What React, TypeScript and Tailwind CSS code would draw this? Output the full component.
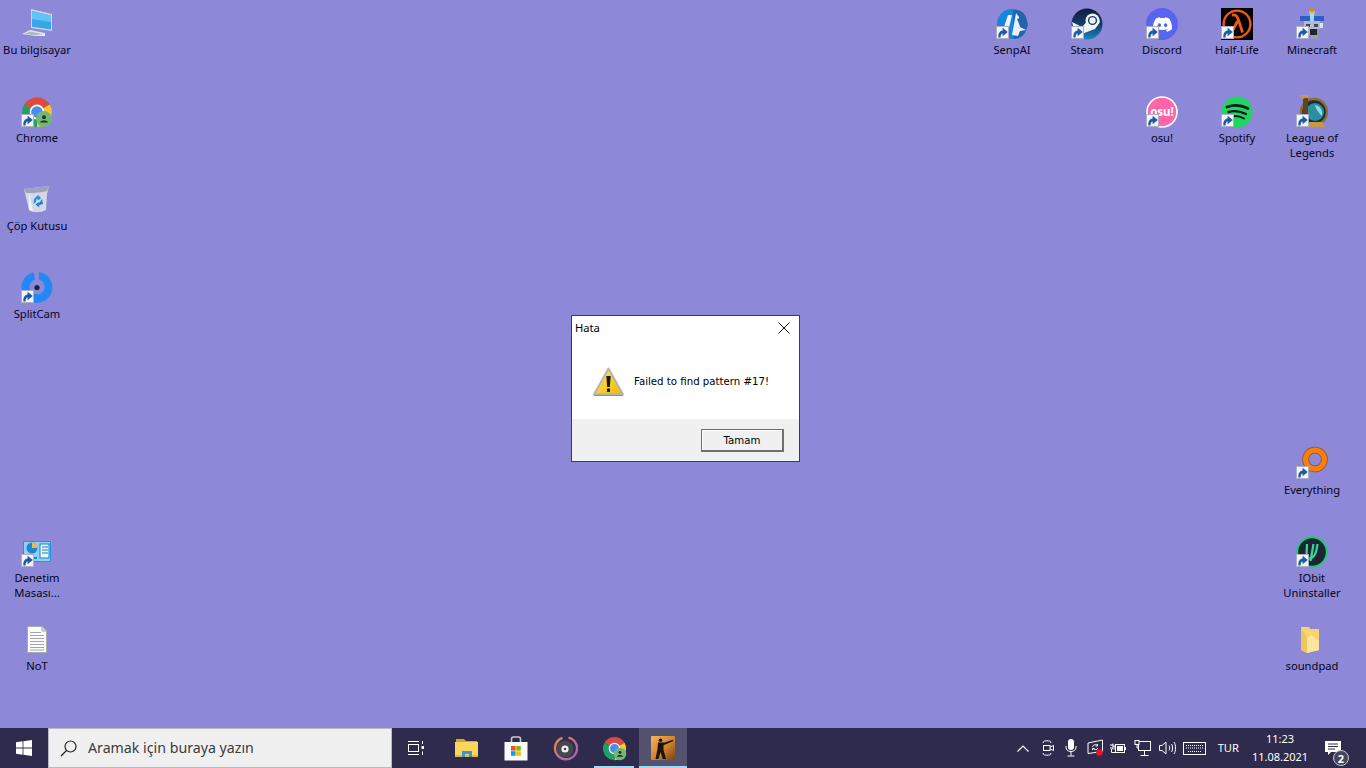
import React from "react";
import { SiDiscord } from "react-icons/si";

const font = { fontFamily: '"Noto Sans", "Liberation Sans", sans-serif' };

function Shortcut() {
  return (
    <svg width="13" height="13" viewBox="0 0 13 13" className="absolute left-0 top-[18px]">
      <rect x="0.5" y="0.5" width="12" height="12" fill="#f2f4fa" stroke="#aeaec4" />
      <path d="M2.4 11.4 C2 7 4 4.6 6.6 4.4 L6.6 1.8 L11.8 6 L6.6 10.2 L6.6 7.6 C5.2 7.8 4.6 9.2 4.6 11.4 Z" fill="#1f5ba3" />
    </svg>
  );
}

function ChromeGlyph({ size = 32 }: { size?: number }) {
  return (
    <svg width={size} height={size} viewBox="0 0 32 32">
      <path d="M16 16 L3.2 8.5 A15 15 0 0 1 28.8 8.5 Z" fill="#dd4b3e" />
      <path d="M16 16 L28.8 8.5 A15 15 0 0 1 16 31 Z" fill="#fbc72c" />
      <path d="M16 16 L16 31 A15 15 0 0 1 3.2 8.5 Z" fill="#1da261" />
      <circle cx="16" cy="16" r="7.4" fill="#fff" />
      <circle cx="16" cy="16" r="5.8" fill="#4a8cf0" />
      <circle cx="23" cy="23" r="8" fill="#72b678" />
      <circle cx="23" cy="21.2" r="1.9" fill="#1c3320" />
      <path d="M19.2 26.4 C19.4 23.8 26.6 23.8 26.8 26.4 Z" fill="#1c3320" />
    </svg>
  );
}

const icons: Record<string, React.ReactNode> = {
  pc: (
    <svg width="36" height="32" viewBox="0 0 36 32" className="overflow-visible">
      <path d="M10 1 L31 6 L31 23 L10 20 Z" fill="#cfd6e2" />
      <path d="M11 3 L30 7.4 L30 21.6 L11 18.8 Z" fill="#36a5ea" />
      <path d="M11 3 L30 7.4 L30 14 L11 11 Z" fill="#62c4f5" />
      <path d="M1 26 L9 22 L24 25 L24 28 L15 28 Z" fill="#e6e8ec" />
      <path d="M3 26 L9 23.4 L22 26 L15 27.2 Z" fill="#b4b8c2" />
    </svg>
  ),
  chrome: <ChromeGlyph />,
  bin: (
    <svg width="32" height="32" viewBox="0 0 32 32">
      <path d="M3 5 L28 2 L26 10 L25 26 C20 29 11 29 8 26 Z" fill="#d3d7e6" />
      <path d="M3 5 L28 2 L26 7 C18 9 10 9 5 9 Z" fill="#9ea3bd" />
      <path d="M8 9 L12 27 L8 26 Z" fill="#f1f3f8" />
      <path d="M13 15 L17 11 L20 14 L18 16 L15.5 15 L15 18 L12.5 20 Z" fill="#2893db" />
      <path d="M21 15 L22 20 L18 21 L18.5 23.5 L14.5 20.5 L18 18 L18.4 19 Z" fill="#1d7ec6" />
    </svg>
  ),
  split: (
    <svg width="32" height="32" viewBox="0 0 32 32">
      <path d="M14 0 A15.5 15.5 0 1 0 19 0.2 L18.6 7.8 A7.5 7.5 0 1 1 14.4 7.6 Z" fill="#2288f5" transform="rotate(-4 16 15)" />
      <circle cx="16" cy="15.5" r="2.6" fill="#1d2233" />
    </svg>
  ),
  panel: (
    <svg width="32" height="32" viewBox="0 0 32 32">
      <rect x="2" y="5" width="28" height="21" fill="#1f93df" />
      <rect x="3" y="6" width="26" height="19" fill="#8fd0f3" />
      <rect x="19" y="8" width="9" height="14" fill="#e9f6fd" stroke="#1c7fc6" />
      <path d="M21 11 H27 M21 14 H27 M21 17 H27" stroke="#1c7fc6" />
      <circle cx="11" cy="12" r="5.5" fill="#1f86d4" />
      <path d="M11 12 L11 6.5 A5.5 5.5 0 0 1 16.5 12 Z" fill="#f4b942" />
      <path d="M6 22 H16" stroke="#2084cf" strokeWidth="2" />
    </svg>
  ),
  note: (
    <svg width="32" height="32" viewBox="0 0 32 32">
      <path d="M6.5 2.5 H21 L25.5 7 V28.5 H6.5 Z" fill="#fbfbfb" stroke="#a9a9b2" />
      <path d="M21 2.5 V7 H25.5 Z" fill="#d8d8de" stroke="#a9a9b2" />
      <path d="M9 8.5 H20 M9 11.5 H23 M9 14.5 H23 M9 17.5 H23 M9 20.5 H23 M9 23.5 H23 M9 26 H23" stroke="#a4a4aa" />
    </svg>
  ),
  senpai: (
    <svg width="32" height="32" viewBox="0 0 32 32">
      <circle cx="16" cy="16" r="15" fill="#1586dd" />
      <path d="M17 2 C22 1 28 4 30 9 L32 17 L29 25 C26 29 22 31 18 31 Z" fill="#2564a8" />
      <path d="M5 28 L12 7 L16 7 L12 24 Z" fill="#eef7ff" />
      <path d="M16 27 L20 5 L23 9 L24 19 L30 22 L24 23 L22 28 Z" fill="#e5f1ff" />
      <path d="M21 11 L24 10 L24 18 Z" fill="#2564a8" />
    </svg>
  ),
  steam: (
    <svg width="32" height="32" viewBox="0 0 32 32">
      <defs>
        <linearGradient id="st" x1="0" y1="0" x2="0" y2="1">
          <stop offset="0" stopColor="#101a3f" />
          <stop offset="0.55" stopColor="#12426f" />
          <stop offset="1" stopColor="#1a86c5" />
        </linearGradient>
      </defs>
      <circle cx="16" cy="16" r="15.5" fill="url(#st)" />
      <path d="M1 14 L11 19 L20 9 L26 8 L29 14 L24 21 L16 24 L9 27 L3 22 Z" fill="#eef3f8" />
      <circle cx="21.5" cy="12.5" r="7" fill="#eef3f8" />
      <circle cx="21.5" cy="12.5" r="4.6" fill="#173a63" />
      <circle cx="21.5" cy="12.5" r="3.2" fill="#eef3f8" />
    </svg>
  ),
  discord: (
    <div className="flex h-8 w-8 items-center justify-center rounded-full bg-[#5865f2] text-[19px] text-white">
      <SiDiscord />
    </div>
  ),
  halflife: (
    <svg width="32" height="32" viewBox="0 0 32 32">
      <rect width="32" height="32" fill="#000" />
      <circle cx="16" cy="16" r="13.4" fill="none" stroke="#f05a10" strokeWidth="2.4" />
      <path d="M11 7 C15 6.5 16 8 17.5 12 L21.5 24.5 M16.6 13 L10.5 24.5" fill="none" stroke="#f05a10" strokeWidth="2.8" />
    </svg>
  ),
  minecraft: (
    <svg width="32" height="32" viewBox="0 0 32 32" shapeRendering="crispEdges">
      <rect x="14" y="0" width="4" height="5" fill="#b6903c" />
      <rect x="13" y="3" width="6" height="3" fill="#d8b24a" />
      <rect x="4" y="8" width="24" height="5" fill="#2f5fc4" />
      <rect x="14" y="5" width="4" height="10" fill="#9cdcf6" />
      <rect x="8" y="13" width="16" height="14" fill="#b6bac9" />
      <rect x="10" y="16" width="4" height="3" fill="#3b4a68" />
      <rect x="18" y="16" width="4" height="3" fill="#3b4a68" />
      <rect x="24" y="15" width="3" height="5" fill="#dfe2ea" />
      <rect x="14" y="21" width="7" height="6" fill="#22242e" />
      <rect x="21" y="21" width="3" height="8" fill="#8f93a5" />
      <rect x="15" y="27" width="7" height="4" fill="#9a9eb0" />
    </svg>
  ),
  osu: (
    <svg width="32" height="32" viewBox="0 0 32 32">
      <circle cx="16" cy="16" r="15" fill="#ff66aa" stroke="#fff" strokeWidth="1.6" />
      <text x="16" y="19.5" textAnchor="middle" fontFamily="'Noto Sans', sans-serif" fontWeight="700" fontSize="11.5" fill="#fff">osu!</text>
    </svg>
  ),
  spotify: (
    <svg width="32" height="32" viewBox="0 0 32 32">
      <circle cx="16" cy="16" r="15.5" fill="#1ed760" />
      <path d="M6 11 C13 8.5 20 9 27 12.5" fill="none" stroke="#17171f" strokeWidth="2.8" strokeLinecap="round" />
      <path d="M7.5 16 C13 14.5 19 15 25 18" fill="none" stroke="#17171f" strokeWidth="2.4" strokeLinecap="round" />
      <path d="M9 20.5 C14 19.5 19 20 23 22.5" fill="none" stroke="#17171f" strokeWidth="2" strokeLinecap="round" />
    </svg>
  ),
  league: (
    <svg width="32" height="32" viewBox="0 0 32 32" className="overflow-visible">
      <circle cx="18" cy="16" r="13" fill="#1a2f38" stroke="#8f6e32" strokeWidth="2.4" />
      <circle cx="19" cy="16" r="9" fill="#2a8f9e" />
      <path d="M19 9 C24 10 27 14 26 20 C23 17 20 14 19 9 Z" fill="#8fd8de" />
      <path d="M3 -1 H13 L12 2 V26 H26 L29 31 H6 L7 28 V3 Z" fill="#c79b46" />
      <path d="M9 2 H12 V26 L7 28 V3 Z" fill="#5f4519" />
    </svg>
  ),
  everything: (
    <svg width="32" height="32" viewBox="0 0 32 32" className="overflow-visible">
      <circle cx="19" cy="11.5" r="9.4" fill="none" stroke="#9c4b24" strokeWidth="6.8" />
      <circle cx="19" cy="11.5" r="9.4" fill="none" stroke="#f67f12" strokeWidth="5.2" />
    </svg>
  ),
  iobit: (
    <svg width="32" height="32" viewBox="0 0 32 32">
      <circle cx="16" cy="16" r="14.8" fill="#1e2530" stroke="#22c878" strokeWidth="2" />
      <path d="M11 8 C11 16 9 22 13.5 22.5 C18.5 22.5 20.5 17 21.5 8 M17.5 8 L14.5 25" fill="none" stroke="#38d6a0" strokeWidth="2.2" />
    </svg>
  ),
  folder: (
    <svg width="32" height="32" viewBox="0 0 32 32">
      <path d="M5 3 L13 3 L14.5 5 L23 5 L23 26 L11 29 L5 26 Z" fill="#f6d56f" />
      <path d="M15 11 L23 17 L23 26 L11 29 L11 14 Z" fill="#fbe59b" />
      <path d="M5 3 L11 14 L11 29 L5 26 Z" fill="#edc75a" />
    </svg>
  ),
};

type Item = { x: number; y: number; icon: string; label: string[] };

const items: Item[] = [
  { x: 37, y: 8, icon: "pc", label: ["Bu bilgisayar"] },
  { x: 37, y: 96, icon: "chrome", label: ["Chrome"] },
  { x: 37, y: 184, icon: "bin", label: ["Çöp Kutusu"] },
  { x: 37, y: 272, icon: "split", label: ["SplitCam"] },
  { x: 37, y: 536, icon: "panel", label: ["Denetim", "Masası..."] },
  { x: 37, y: 624, icon: "note", label: ["NoT"] },
  { x: 1012, y: 8, icon: "senpai", label: ["SenpAI"] },
  { x: 1087, y: 8, icon: "steam", label: ["Steam"] },
  { x: 1162, y: 8, icon: "discord", label: ["Discord"] },
  { x: 1237, y: 8, icon: "halflife", label: ["Half-Life"] },
  { x: 1312, y: 8, icon: "minecraft", label: ["Minecraft"] },
  { x: 1162, y: 96, icon: "osu", label: ["osu!"] },
  { x: 1237, y: 96, icon: "spotify", label: ["Spotify"] },
  { x: 1312, y: 96, icon: "league", label: ["League of", "Legends"] },
  { x: 1312, y: 448, icon: "everything", label: ["Everything"] },
  { x: 1312, y: 536, icon: "iobit", label: ["IObit", "Uninstaller"] },
  { x: 1312, y: 624, icon: "folder", label: ["soundpad"] },
];

const noShortcut = new Set(["pc", "bin", "note", "folder"]);

function DesktopIcon({ item }: { item: Item }) {
  return (
    <div
      className="absolute flex w-[75px] flex-col items-center"
      style={{ left: item.x - 37.5, top: item.y }}
    >
      <div className="relative h-8 w-8">
        {icons[item.icon]}
        {!noShortcut.has(item.icon) && <Shortcut />}
      </div>
      <div className="mt-[2px] text-center text-[11.2px] leading-[15px] text-[#05051a]">
        {item.label.map((l) => (
          <div key={l} className="whitespace-nowrap">{l}</div>
        ))}
      </div>
    </div>
  );
}

function Dialog() {
  return (
    <div className="absolute left-[571px] top-[315px] flex h-[147px] w-[229px] flex-col border border-[#3c3c50] bg-white">
      <div className="flex h-[23px] items-center justify-between pl-[3px] pr-[9px] pt-[1px] text-[11.2px] text-black">
        <span>Hata</span>
        <svg width="12" height="12" viewBox="0 0 12 12">
          <path d="M0.5 0.5 L11.5 11.5 M11.5 0.5 L0.5 11.5" stroke="#111" strokeWidth="1" />
        </svg>
      </div>
      <div className="flex flex-1 items-center pl-[21px] pt-[6px]">
        <svg width="32" height="30" viewBox="0 0 32 30">
          <defs>
            <linearGradient id="wg" x1="0" y1="0" x2="1" y2="1">
              <stop offset="0" stopColor="#ffe94f" />
              <stop offset="1" stopColor="#f2b60f" />
            </linearGradient>
          </defs>
          <path d="M15.5 1.5 L30 27.5 L1 27.5 Z" fill="url(#wg)" stroke="#b4b4b4" strokeWidth="2" strokeLinejoin="round" />
          <path d="M1 28.5 H30" stroke="#8f8f8f" />
          <path d="M13.3 9 H17.7 L16.8 20 H14.2 Z" fill="#171717" />
          <rect x="14" y="21.5" width="3" height="3.4" fill="#171717" />
        </svg>
        <span className="ml-[9px] text-[10.2px] text-black" style={{ fontFamily: '"DejaVu Sans", sans-serif' }}>
          Failed to find pattern #17!
        </span>
      </div>
      <div className="flex h-[42px] items-center justify-end bg-[#f0f0f0] pr-[15px]">
        <div
          className="flex h-[23px] w-[83px] items-center justify-center border border-[#707070] border-b-2 border-r-2 bg-[#f0f0f0] pt-[2px] text-[10.2px] text-black shadow-[inset_1px_1px_0_#fff]"
          style={{ fontFamily: '"DejaVu Sans", sans-serif' }}
        >
          Tamam
        </div>
      </div>
    </div>
  );
}

function TaskViewIcon() {
  return (
    <svg width="16" height="14" viewBox="0 0 16 14" fill="none" stroke="#fff">
      <path d="M0 0.5 H11 M0 13.5 H11 M14.5 0 V3 M14.5 10.5 V14" />
      <rect x="0.5" y="3.5" width="10" height="7" />
      <rect x="13.5" y="5" width="2.5" height="3" fill="#fff" stroke="none" />
    </svg>
  );
}

function ExplorerIcon() {
  return (
    <svg width="24" height="20" viewBox="0 0 24 20">
      <path d="M1 1 H9 L11 3 H22 V7 H1 Z" fill="#d9a226" />
      <path d="M0 4 H23 V19 H0 Z" fill="#fbd55e" />
      <path d="M0 17 H23 V19 H0 Z" fill="#e9b53a" />
      <path d="M7 19 V13 H17 V19 H14 V16 H10 V19 Z" fill="#3a94d8" />
    </svg>
  );
}

function StoreIcon() {
  return (
    <svg width="24" height="25" viewBox="0 0 24 25">
      <path d="M7.5 7 V3 C7.5 1.5 8.5 1 9.5 1 H14.5 C15.5 1 16.5 1.5 16.5 3 V7" fill="none" stroke="#c9cad2" strokeWidth="1.6" />
      <rect x="0.5" y="6" width="23" height="18.5" fill="#fbfbfb" />
      <rect x="7" y="10" width="4.6" height="4.6" fill="#f25022" />
      <rect x="12.2" y="10" width="4.6" height="4.6" fill="#7fba00" />
      <rect x="7" y="15.2" width="4.6" height="4.6" fill="#00a4ef" />
      <rect x="12.2" y="15.2" width="4.6" height="4.6" fill="#ffb900" />
    </svg>
  );
}

function DiscIcon() {
  return (
    <svg width="25" height="25" viewBox="0 0 25 25">
      <defs>
        <linearGradient id="dg" x1="0" y1="0" x2="1" y2="1">
          <stop offset="0" stopColor="#e98a4a" />
          <stop offset="1" stopColor="#9b63c4" />
        </linearGradient>
      </defs>
      <path d="M15.5 1.6 A11 11 0 1 1 9.5 1.9" fill="none" stroke="url(#dg)" strokeWidth="2.4" />
      <circle cx="12" cy="13" r="8.6" fill="#48474f" />
      <circle cx="12" cy="13" r="3.6" fill="#f3f3f3" />
      <circle cx="12" cy="13" r="1.3" fill="#48474f" />
    </svg>
  );
}

function CsIcon() {
  return (
    <svg width="24" height="24" viewBox="0 0 24 24">
      <defs>
        <linearGradient id="cs" x1="0" y1="0" x2="1" y2="1">
          <stop offset="0" stopColor="#f6b458" />
          <stop offset="0.55" stopColor="#d0812c" />
          <stop offset="1" stopColor="#7a4018" />
        </linearGradient>
      </defs>
      <rect width="24" height="24" rx="1" fill="url(#cs)" />
      <circle cx="9.5" cy="4.2" r="1.8" fill="#1d1409" />
      <path d="M7 6.5 L11 6.5 L14 6.6 L22 3.8 L22.3 5 L16 7.8 L12.5 9.2 L12.5 14 L15 23 L11.8 23 L9.5 16 L7.5 23 L4.5 23 L6.5 13 Z" fill="#1d1409" />
    </svg>
  );
}

function Tray() {
  const c = "#fff";
  return (
    <div className="flex items-center text-white">
      <svg width="12" height="7" viewBox="0 0 12 7" fill="none" stroke={c} strokeWidth="1.2">
        <path d="M0.5 6.5 L6 1 L11.5 6.5" />
      </svg>
      <svg width="12" height="16" viewBox="0 0 12 16" fill="none" stroke={c} className="ml-[13px]">
        <path d="M1 3 C1 1 3 0.8 5 0.8 C7 0.8 9 1 9 3 M1 13 C1 15 3 15.2 5 15.2 C7 15.2 9 15 9 13" />
        <rect x="1.5" y="5.5" width="6.5" height="5" />
        <path d="M8 7 L11.5 5.5 V10.5 L8 9" />
      </svg>
      <svg width="12" height="18" viewBox="0 0 12 18" className="ml-[11px]">
        <rect x="3" y="0" width="6" height="11" rx="3" fill={c} />
        <path d="M1 7 V8 C1 11 3 12.5 6 12.5 C9 12.5 11 11 11 8 V7 M6 12.5 V16.5 M2.5 17 H9.5" fill="none" stroke={c} />
      </svg>
      <svg width="17" height="18" viewBox="0 0 17 18" className="ml-[10px]" fill="none" stroke={c}>
        <path d="M1 4 L15.5 1 V12.5 L1 14.5 Z" />
        <path d="M5.5 8 C6 5.5 9 5 10.5 6.5 M11 9 C10 11 7.5 11 6.5 10 M10.5 5 V7 H8.5 M5.5 11 V9.5 H7.5" strokeWidth="1" />
        <circle cx="12.5" cy="13.5" r="3.3" fill="#f0141e" stroke="none" />
      </svg>
      <svg width="16" height="12" viewBox="0 0 16 12" fill="none" stroke={c} className="ml-[6px]">
        <path d="M0 3 H3 M0 6 H3 M3 1.5 V7.5 M3 4 H5 V8 M5 10.5 H1.5 V7" />
        <rect x="5.5" y="2.5" width="9" height="8" />
        <rect x="7" y="4" width="6" height="5" fill={c} stroke="none" />
        <rect x="15" y="5" width="1" height="3" fill={c} stroke="none" />
      </svg>
      <svg width="17" height="16" viewBox="0 0 17 16" fill="none" stroke={c} className="ml-[8px]">
        <rect x="4.5" y="1.5" width="12" height="9" />
        <rect x="1" y="0.5" width="4" height="4" fill="#2e2b4d" />
        <path d="M10.5 10.5 V15 M6.5 15.5 H14.5 M3 4.5 V8 H4.5" />
      </svg>
      <svg width="17" height="14" viewBox="0 0 17 14" fill="none" stroke={c} className="ml-[8px]">
        <path d="M0.5 4.5 H3 L7 1 V13 L3 9.5 H0.5 Z" />
        <path d="M10 4.5 C11 6 11 8 10 9.5 M12.5 3 C14 5 14 9 12.5 11 M15 1 C17 4 17 10 15 13" />
      </svg>
      <svg width="23" height="13" viewBox="0 0 23 13" fill="none" stroke={c} className="ml-[7px]">
        <rect x="0.5" y="0.5" width="22" height="12" />
        <path d="M3 3.5 H20 M3 6 H20 M5 9.5 H18" strokeDasharray="1 1" />
      </svg>
    </div>
  );
}

export default function App() {
  return (
    <div className="flex h-screen w-screen flex-col overflow-hidden bg-[#8d88d7]" style={font}>
      <div className="relative flex-1">
        {items.map((it) => (
          <DesktopIcon key={it.label[0]} item={it} />
        ))}
        <Dialog />
      </div>
      <div className="flex h-10 items-stretch bg-[#2e2b4d] text-white">
        <div className="flex w-12 items-center justify-center">
          <svg width="16" height="16" viewBox="0 0 16 16" fill="#fff">
            <path d="M0 2.3 L6.6 1.3 V7.5 H0 Z M7.4 1.2 L16 0 V7.5 H7.4 Z M0 8.4 H6.6 V14.7 L0 13.7 Z M7.4 8.4 H16 V16 L7.4 14.8 Z" />
          </svg>
        </div>
        <div className="flex w-[344px] items-center border border-[#b8b8c0] bg-[#f0f0f0] pl-[11px] text-[14.2px] text-[#3a3a3a]">
          <svg width="17" height="17" viewBox="0 0 17 17" fill="none" stroke="#222" strokeWidth="1.2">
            <circle cx="10.5" cy="6.5" r="5.5" />
            <path d="M6.5 10.5 L1 16" />
          </svg>
          <span className="ml-[11px]">Aramak için buraya yazın</span>
        </div>
        <div className="flex w-12 items-center justify-center"><TaskViewIcon /></div>
        <div className="ml-[3px] flex w-12 items-center justify-center"><ExplorerIcon /></div>
        <div className="flex w-[49px] items-center justify-center"><StoreIcon /></div>
        <div className="flex w-[50px] items-center justify-center"><DiscIcon /></div>
        <div className="relative flex w-[49px] items-center justify-center">
          <ChromeGlyph size={25} />
          <div className="absolute bottom-0 left-[4px] h-[2px] w-[40px] bg-[#a6d8f5]" />
        </div>
        <div className="relative flex w-[48px] items-center justify-center bg-[#55526f]">
          <CsIcon />
          <div className="absolute bottom-0 left-0 right-0 h-[2px] bg-[#a6d8f5]" />
        </div>
        <div className="flex-1" />
        <Tray />
        <div className="ml-[12px] flex items-center text-[11.2px]">TUR</div>
        <div className="ml-[14px] flex w-[54px] flex-col items-center justify-center text-[11px] leading-[18px]">
          <span>11:23</span>
          <span className="whitespace-nowrap">11.08.2021</span>
        </div>
        <div className="relative ml-[18px] flex w-[41px] items-center">
          <svg width="16" height="15" viewBox="0 0 16 15" fill="#fff">
            <path d="M0 0 H16 V11 H6 L3 14 V11 H0 Z" />
            <path d="M3 3 H13 M3 5.5 H13 M3 8 H10" stroke="#2e2b4d" />
          </svg>
          <div className="absolute left-[8px] top-[22px] flex h-[16px] w-[16px] items-center justify-center rounded-full border border-[#c8c8c8] bg-[#47465a] text-[11px] font-bold leading-none">
            2
          </div>
        </div>
      </div>
    </div>
  );
}
